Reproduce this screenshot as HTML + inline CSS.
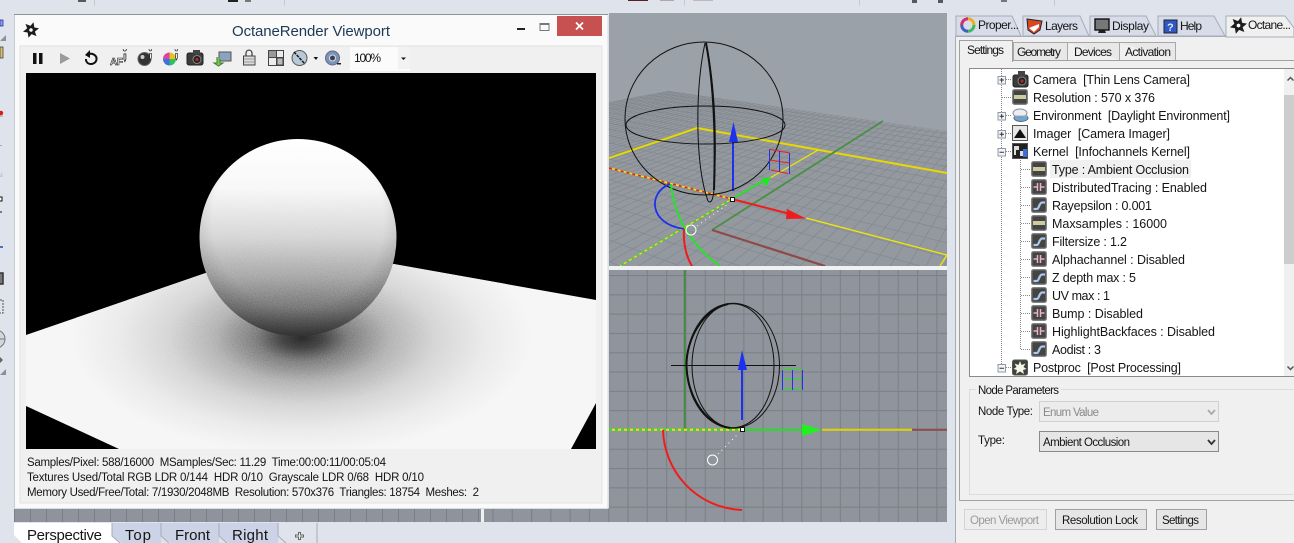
<!DOCTYPE html>
<html><head><meta charset="utf-8"><title>OctaneRender Viewport</title>
<style>
html,body{margin:0;padding:0;background:#dfe3eb;overflow:hidden}
svg{display:block}
text{font-family:"Liberation Sans",sans-serif;font-size:11.5px;fill:#151515;white-space:pre}
.tr text{font-size:12.5px}
.g{fill:#8a8a8a}
</style></head><body>
<svg width="1294" height="543" viewBox="0 0 1294 543" xmlns="http://www.w3.org/2000/svg">
<defs>
<filter id="n" x="0" y="0" width="100%" height="100%" color-interpolation-filters="sRGB"><feTurbulence type="fractalNoise" baseFrequency="1.2" numOctaves="2" seed="4"/><feColorMatrix values="1 0 0 0 .04 1 0 0 0 .04 1 0 0 0 .04 0 0 0 0 1"/></filter>
<linearGradient id="sph" x1="0" y1="0" x2="0" y2="1"><stop offset="0" stop-color="#fff"/><stop offset=".25" stop-color="#f8f8f8"/><stop offset=".5" stop-color="#d6d6d6"/><stop offset=".7" stop-color="#a8a8a8"/><stop offset=".86" stop-color="#767676"/><stop offset="1" stop-color="#3a3a3a"/></linearGradient>
<radialGradient id="edge" cx=".5" cy=".42" r=".58"><stop offset=".75" stop-color="#000" stop-opacity="0"/><stop offset="1" stop-color="#000" stop-opacity=".16"/></radialGradient>
<radialGradient id="shd" gradientUnits="userSpaceOnUse" cx="0" cy="0" r="1" gradientTransform="translate(302 338) scale(230 115)"><stop offset="0" stop-color="#2a2a2a"/><stop offset=".09" stop-color="#454545"/><stop offset=".2" stop-color="#7e7e7e"/><stop offset=".38" stop-color="#b4b4b4"/><stop offset=".58" stop-color="#d6d6d6"/><stop offset=".8" stop-color="#ebebeb"/><stop offset="1" stop-color="#f6f6f6"/></radialGradient>
<clipPath id="rc"><rect x="26" y="73" width="570" height="376"/></clipPath>
<clipPath id="floor"><path d="M26 335L287 245L596 300V403L571 449H119L26 406Z"/></clipPath>
<clipPath id="lit"><path d="M26 335L287 245L596 300V403L571 449H119L26 406Z"/><circle cx="298" cy="237.5" r="98.5"/></clipPath>
<clipPath id="tv"><rect x="609" y="13" width="338" height="253"/></clipPath>
<clipPath id="fl"><path d="M609 102L668 91L947 131V266H609Z"/></clipPath>
<clipPath id="bv"><rect x="609" y="270" width="338" height="252"/></clipPath>
<pattern id="grid" patternUnits="userSpaceOnUse" x="608.2" y="275" width="19.3" height="19.3"><rect width="19.3" height="19.3" fill="#90959d"/><path d="M.5 0V19.3M0 .5H19.3" stroke="#7c8188" stroke-width="1.300" fill="none"/></pattern>
<pattern id="bgrid" patternUnits="userSpaceOnUse" x="14" y="508" width="16" height="16"><rect width="16" height="16" fill="#8f949c"/><path d="M.5 0V16M0 .5H16" stroke="#7a7f86" stroke-width="1" fill="none"/></pattern>
<g id="blade"><path d="M-1.500 -3L2.500 -7.800L3.400 -2.200L1.700 -1L-.2 -2Z"/></g>
<symbol id="oct" viewBox="-8 -8 16 16" overflow="visible"><g fill="#1c1c1c"><use href="#blade"/><use href="#blade" transform="rotate(60)"/><use href="#blade" transform="rotate(120)"/><use href="#blade" transform="rotate(180)"/><use href="#blade" transform="rotate(240)"/><use href="#blade" transform="rotate(300)"/></g><circle r="1.500" fill="#fff"/></symbol>
<symbol id="iint" viewBox="0 0 16 16"><rect x=".5" y=".5" width="15" height="15" rx="2" fill="#5c5c5c" stroke="#858585"/><rect x="2" y="2" width="12" height="12" fill="#444"/><rect x="2" y="6" width="12" height="4" fill="#cfcba0"/></symbol>
<symbol id="icur" viewBox="0 0 16 16"><rect x=".5" y=".5" width="15" height="15" rx="2" fill="#5c5c5c" stroke="#858585"/><rect x="2" y="2" width="12" height="12" fill="#444"/><path d="M2.500 12H6C8 12 8 6 11 5.500H14" stroke="#a8c8ec" stroke-width="2.200" fill="none"/></symbol>
<symbol id="ipin" viewBox="0 0 16 16"><rect x=".5" y=".5" width="15" height="15" rx="2" fill="#5c5c5c" stroke="#858585"/><rect x="2" y="2" width="12" height="12" fill="#444"/><path d="M2.500 8H6.500M6.500 4V12M9.500 4V12M9.500 8H13.500" stroke="#eab0cc" stroke-width="1.500" fill="none"/></symbol>
<symbol id="mi" viewBox="0 0 18 18"><path d="M12.500 1.500a2 2 0 1 1 .1 0M11.500 5H14V12L12.700 15L11.500 12Z" fill="#e8eefa" stroke="#222"/></symbol>
</defs>

<!-- base -->
<rect width="1294" height="543" fill="#dfe3eb"/>

<!-- top strip bits -->
<g fill="#55585e"><rect x="78" y="0" width="8" height="2"/><rect x="228" y="0" width="10" height="2" fill="#222"/><rect x="245" y="0" width="6" height="2" fill="#777"/><rect x="628" y="0" width="20" height="1" fill="#5a2020"/><rect x="660" y="0" width="14" height="1" fill="#aaa"/><rect x="693" y="0" width="20" height="1" fill="#bbb"/><rect x="1001" y="0" width="6" height="2" fill="#777"/><rect x="912" y="0" width="5" height="3"/><rect x="938" y="0" width="5" height="3"/></g>
<path d="M94.500 0V6M284.500 0V6M684.500 0V6M859.500 0V6M1054.500 0V6" stroke="#c4c9d2"/>

<!-- left strip bits -->
<rect x="0" y="20" width="3" height="6" fill="#8aa4f0" stroke="#1a1a9a" stroke-width=".7"/>
<path d="M6 35L0 41H6Z" fill="#8d9197"/>
<rect x="0" y="47" width="3" height="11" fill="#d8c070" stroke="#333" stroke-width=".7"/>
<circle cx="1" cy="113" r="2.200" fill="#e01818"/>
<path d="M0 116H3" stroke="#999"/><path d="M0 145.500H2" stroke="#aaa"/>
<path d="M0 177H3L1.500 172Z" fill="#c6c9ce"/>
<rect x="-1" y="197" width="3" height="4" fill="#fff" stroke="#111"/>
<path d="M0 212H2" stroke="#111"/>
<path d="M0 247H3" stroke="#2244bb" stroke-width="1.500"/>
<path d="M0 273H3V284H0M0 284H3" stroke="#333" stroke-width="1.500" fill="#777"/>
<path d="M0 300H3V313H0" stroke="#555" stroke-dasharray="2 1" fill="none"/>
<circle cx="-4" cy="339" r="9" fill="#d3d6dc" stroke="#777"/><path d="M0 339H5" stroke="#777"/>
<path d="M0 357L3 360L0 363Z" fill="#666"/>
<path d="M6 369L0 375H6Z" fill="#8d9197"/>

<!-- top perspective viewport -->
<rect x="609" y="13" width="338" height="253" fill="#9ba1a9"/>
<g clip-path="url(#tv)">
<g clip-path="url(#fl)">
<rect x="609" y="85" width="338" height="185" fill="#93999f"/>
<path stroke="#82888f" stroke-width=".7" fill="none" d="M1063 6L-190 266M1063 6L-172 266M1063 6L-154 266M1063 6L-136 266M1063 6L-118 266M1063 6L-100 266M1063 6L-82 266M1063 6L-64 266M1063 6L-46 266M1063 6L-28 266M1063 6L-10 266M1063 6L8 266M1063 6L26 266M1063 6L44 266M1063 6L62 266M1063 6L80 266M1063 6L98 266M1063 6L116 266M1063 6L134 266M1063 6L152 266M1063 6L170 266M1063 6L188 266M1063 6L206 266M1063 6L224 266M1063 6L242 266M1063 6L260 266M1063 6L278 266M1063 6L296 266M1063 6L314 266M1063 6L332 266M1063 6L350 266M1063 6L368 266M1063 6L386 266M1063 6L404 266M1063 6L422 266M1063 6L440 266M1063 6L458 266M1063 6L476 266M1063 6L494 266M1063 6L512 266M1063 6L530 266M1063 6L548 266M1063 6L566 266M1063 6L584 266M1063 6L602 266M1063 6L620 266M1063 6L638 266M1063 6L656 266M1063 6L674 266M1063 6L692 266M1063 6L710 266M1063 6L728 266M1063 6L746 266M1063 6L764 266M1063 6L782 266M1063 6L800 266M1063 6L818 266M1063 6L836 266M1063 6L854 266M1063 6L872 266M1063 6L890 266M1063 6L908 266M1063 6L926 266M1063 6L944 266"/>
<path stroke="#82888f" stroke-width=".7" fill="none" d="M-77 -11L620 266M-77 -11L680 266M-77 -11L740 266M-77 -11L800 266M-77 -11L860 266M-77 -11L920 266M-77 -11L980 266M-77 -11L1040 266M-77 -11L1100 266M-77 -11L1160 266M-77 -11L1220 266M-77 -11L1280 266M-77 -11L1340 266M-77 -11L1400 266M-77 -11L1460 266M-77 -11L1520 266M-77 -11L1580 266M-77 -11L1640 266M-77 -11L1700 266M-77 -11L1760 266M-77 -11L1820 266M-77 -11L1880 266M-77 -11L1940 266M-77 -11L2000 266"/>
</g>
<path d="M609 158L697 128L947 173" stroke="#e6d800" stroke-width="2" fill="none"/>
<path d="M712 230L883 121" stroke="#4a8f44" stroke-width="1.800"/>
<path d="M712 230L825 266" stroke="#8c4a48" stroke-width="2.200"/>
<path d="M806 218L947 255L940 266" stroke="#efe800" stroke-width="1.300" fill="none"/>
<path d="M770 178L818 150" stroke="#efe800" stroke-width="1.300"/>
<path d="M609 168L732 199" stroke="#efe800" stroke-width="1.500"/>
<path d="M609 168L732 199" stroke="#f01818" stroke-width="1.500" stroke-dasharray="3 3"/>
<path d="M732 199L620 266" stroke="#efe800" stroke-width="1.300"/>
<path d="M732 199L620 266" stroke="#22dd22" stroke-width="1.300" stroke-dasharray="3 3"/>
<path d="M732 199L765 180" stroke="#20e820" stroke-width="1.800"/><path d="M771 177L761 179L766 187Z" fill="#20e820"/>
<path d="M732 199L790 214" stroke="#f01c1c" stroke-width="2"/><path d="M806 218.500L787 209L786 219Z" fill="#f01c1c"/>
<path d="M733 191V140" stroke="#1c30f0" stroke-width="2"/><path d="M733.500 122L729 142H738Z" fill="#1c30f0"/>
<g fill="none" stroke="#111">
<ellipse cx="704" cy="118.500" rx="79" ry="76.500" stroke-width="1"/>
<ellipse cx="705.500" cy="125" rx="79.500" ry="19" stroke-width="1"/>
<path d="M705 43C695 90 695 165 708 201C711 204 713 200 714 190C717 140 715 85 706 42" stroke-width="1"/>
<path d="M706 43C713 80 716 130 714 190" stroke-width="2"/>
</g>
<g fill="none" stroke-width="1"><path d="M770 149.500L790 153M770 160L789 163M771 170L788 173.500" stroke="#f01c1c"/><path d="M769.500 149.500V170M779.500 151V172M789.500 153V174" stroke="#2030e0"/></g>
<path d="M670 184C648 192 648 224 684 229" stroke="#1c30f0" stroke-width="1.800" fill="none"/>
<path d="M671 184C674 215 690 245 720 266" stroke="#20e820" stroke-width="1.800" fill="none"/>
<path d="M684 229C683 245 687 258 692 266" stroke="#f01c1c" stroke-width="2" fill="none"/>
<circle cx="691" cy="230" r="5" fill="none" stroke="#fff"/>
<path d="M697 226L728 204" stroke="#fff" stroke-dasharray="1 4"/>
<rect x="730.500" y="197.500" width="4" height="4" fill="#fff" stroke="#111"/>
</g>
<rect x="609" y="266" width="338" height="4" fill="#f0f1f3"/>

<!-- bottom front viewport -->
<rect x="609" y="270" width="338" height="252" fill="url(#grid)"/>
<g clip-path="url(#bv)">
<path d="M684.700 270V429" stroke="#468c40" stroke-width="2"/>
<path d="M609 429.700H740" stroke="#efe800" stroke-width="2"/>
<path d="M609 429.700H740" stroke="#22e022" stroke-width="2" stroke-dasharray="3 3"/>
<path d="M744 429.700H802" stroke="#20e020" stroke-width="2"/>
<path d="M822 430L802 424V436Z" fill="#20f020"/>
<path d="M822 429.700H912" stroke="#e2d400" stroke-width="2"/>
<path d="M912 429.700H947" stroke="#8c4a48" stroke-width="2"/>
<g fill="none" stroke="#111"><ellipse cx="733" cy="365.700" rx="46.500" ry="62.500" stroke-width="1"/><ellipse cx="733" cy="365.700" rx="41" ry="62" stroke-width="1"/><path d="M728 304C702 310 686 340 686.500 366C687 395 705 425 730 428" stroke-width="2"/></g>
<path d="M671 365.500H796" stroke="#111" stroke-width="1"/>
<path d="M742 420V368" stroke="#1c30f0" stroke-width="2"/><path d="M742 350L738 370H747Z" fill="#1c30f0"/>
<g fill="none" stroke-width="1"><path d="M782 369.500H802M782 379.500H802M782 389.500H802" stroke="#22e022"/><path d="M782.500 370V390M792.500 370V390M802.500 370V390" stroke="#2030f0"/></g>
<path d="M663 430C664 470 695 508 742 510" stroke="#f01c1c" stroke-width="2" fill="none"/>
<circle cx="712.500" cy="460" r="5" fill="none" stroke="#fff"/>
<path d="M718 454L738 434" stroke="#fff" stroke-dasharray="1 4"/>
<rect x="740.500" y="427.500" width="4" height="4" fill="#fff" stroke="#111"/>
</g>

<!-- strip under window -->
<rect x="14" y="508" width="467" height="14" fill="url(#bgrid)"/>
<rect x="481" y="508" width="3" height="14" fill="#f0f1f3"/>
<rect x="484" y="508" width="125" height="14" fill="url(#grid)"/>

<!-- render window -->
<rect x="14" y="14" width="594" height="495" fill="#fafafa"/>
<path d="M14 14.500H608" stroke="#8d929a"/><path d="M14.500 15V508" stroke="#c8ccd2"/>
<path d="M608 15V509M14 508.500H608" stroke="#d8dbe0"/>
<rect x="20" y="46" width="582" height="457" fill="#f0f0f0" stroke="#e2e2e2"/>
<use href="#oct" x="23" y="22" width="16" height="16"/>
<text x="232" y="36" textLength="158" style="font-size:15px;fill:#1b3a57">OctaneRender Viewport</text>
<rect x="517" y="28" width="8" height="2" fill="#222"/>
<rect x="540" y="23.500" width="9" height="7" fill="none" stroke="#777" stroke-width="1"/><rect x="540" y="23" width="9" height="2" fill="#777"/>
<rect x="557" y="16" width="45" height="20" fill="#c75050"/>
<path d="M576 22.500L583 29.500M583 22.500L576 29.500" stroke="#fff" stroke-width="1.800"/>

<!-- toolbar icons -->
<rect x="33" y="53" width="3.500" height="11" fill="#111"/><rect x="39" y="53" width="3.500" height="11" fill="#111"/>
<path d="M60 53L70 58.500L60 64Z" fill="#9b9b9b"/>
<path d="M87.500 54.500C93 52 97 56 96.500 59.500C96 63 92 65 88.500 63.500C86.500 62.500 85.800 60.500 86 59" stroke="#111" stroke-width="2" fill="none"/><path d="M90 50L85 55L90 58Z" fill="#111"/>
<text x="110" y="65" style="font-size:10px;font-weight:bold;fill:#fff;stroke:#222;stroke-width:.6" textLength="13">AF</text>
<use href="#mi" x="115" y="49" width="14" height="16"/>
<circle cx="144.500" cy="59" r="6.500" fill="#333" stroke="#666"/><circle cx="142.500" cy="57" r="2" fill="#ccc"/><use href="#mi" x="142" y="49" width="12" height="14"/>
<g transform="translate(169.500 59)"><path d="M0 0L0 -6.500A6.500 6.500 0 0 1 6.500 0Z" fill="#e8c020"/><path d="M0 0L6.500 0A6.500 6.500 0 0 1 0 6.500Z" fill="#30c060"/><path d="M0 0L0 6.500A6.500 6.500 0 0 1 -6.500 0Z" fill="#4070e0"/><path d="M0 0L-6.500 0A6.500 6.500 0 0 1 0 -6.500Z" fill="#e040a0"/></g><use href="#mi" x="168" y="49" width="12" height="14"/>
<rect x="187" y="53" width="16" height="12" rx="2" fill="#3c3c3c" stroke="#222"/><rect x="193" y="50" width="7" height="4" fill="#444"/><circle cx="197" cy="59.500" r="4" fill="#222" stroke="#888"/><circle cx="197" cy="59.500" r="1.600" fill="#b02828"/>
<rect x="219" y="52" width="12" height="9" fill="#8aa4c0" stroke="#555"/><path d="M217 57V63H214L218.500 66L223 63H220V59" fill="#80c850" stroke="#3a7a2a"/>
<path d="M246 56V53.500C246 49 252 49 252 53.500V56" fill="none" stroke="#444" stroke-width="1.300"/><rect x="243.500" y="56" width="11.500" height="9" fill="#dcdcdc" stroke="#444"/><path d="M244 59H255M244 62H255" stroke="#999"/>
<rect x="268.500" y="50.500" width="15" height="15" fill="#ececec" stroke="#444"/><path d="M268.500 57.500H283M276.500 50.500V65" stroke="#444"/><rect x="269" y="51" width="7" height="6" fill="#999"/><rect x="277" y="58" width="6" height="7" fill="#bbb" stroke="#444"/>
<circle cx="299.500" cy="58" r="7.500" fill="#b8c8d4" stroke="#555"/><path d="M294 52L305 64" stroke="#111" stroke-width="1.400" stroke-dasharray="3 1"/>
<path d="M313.500 57H318L316 60Z" fill="#111"/>
<circle cx="332.500" cy="58" r="7" fill="#7a94b4" stroke="#668"/><circle cx="332.500" cy="58" r="3" fill="#345" stroke="#dde"/><rect x="337" y="63" width="4" height="1.500" fill="#222"/>
<rect x="350" y="47" width="60" height="24" fill="#fbfbfb"/><rect x="398" y="47" width="12" height="22" fill="#f2f2f2"/>
<text x="354" y="62" textLength="27" style="font-size:12px;fill:#111">100%</text>
<path d="M401 57.500H406L403.500 60Z" fill="#111"/>

<!-- render -->
<g clip-path="url(#rc)">
<rect x="26" y="73" width="570" height="376" fill="#000"/>
<path d="M26 335L287 245L596 300V403L571 449H119L26 406Z" fill="#f6f6f6"/>
<g clip-path="url(#floor)"><ellipse cx="302" cy="338" rx="230" ry="115" fill="url(#shd)"/></g>
<circle cx="298" cy="237.500" r="98.500" fill="url(#sph)"/>
<circle cx="298" cy="237.500" r="98.500" fill="url(#edge)"/>
<rect x="26" y="73" width="570" height="376" filter="url(#n)" clip-path="url(#lit)" style="mix-blend-mode:overlay" opacity=".24"/>
</g>

<!-- status -->
<text x="27" y="466" textLength="359">Samples/Pixel: 588/16000  MSamples/Sec: 11.29  Time:00:00:11/00:05:04</text>
<text x="27" y="481" textLength="397">Textures Used/Total RGB LDR 0/144  HDR 0/10  Grayscale LDR 0/68  HDR 0/10</text>
<text x="27" y="496" textLength="452">Memory Used/Free/Total: 7/1930/2048MB  Resolution: 570x376  Triangles: 18754  Meshes:  2</text>

<!-- bottom tabs -->
<rect x="14" y="522" width="940" height="21" fill="#dfe3eb"/>
<path d="M112 523V536L122 543H161V523Z" fill="#ccd3e6"/>
<path d="M161 523V536L171 543H219V523Z" fill="#ccd3e6"/>
<path d="M219 523V536L229 543H278V523Z" fill="#ccd3e6"/>
<path d="M14 523H112V536L120 543H22L14 535Z" fill="#fff"/>
<path d="M112 523V536L120 543M161 523V536L169 543M219 523V536L227 543M278 523V536L286 543M317 523V543" stroke="#a5acba" fill="none"/>
<text x="27" y="540" textLength="75" style="font-size:15px">Perspective</text>
<text x="125" y="540" textLength="26" style="font-size:15px">Top</text>
<text x="175" y="540" textLength="35" style="font-size:15px">Front</text>
<text x="232" y="540" textLength="36" style="font-size:15px">Right</text>
<path d="M298.500 532.500H300.500V535H303.500V537H300.500V539.500H298.500V537H295.500V535H298.500Z" fill="#eef0f4" stroke="#666"/>

<!-- right panel -->
<rect x="955" y="36" width="339" height="507" fill="#f0f0f0"/>
<path d="M955.500 36V543" stroke="#a6adb9"/>
<path d="M956 36V16H1012L1021 36Z" fill="#d7dce8" stroke="#a6adb9"/>
<path d="M1023 36V16H1080L1089 36Z" fill="#d7dce8" stroke="#a6adb9"/>
<path d="M1090 36V16H1146L1156 36Z" fill="#d7dce8" stroke="#a6adb9"/>
<path d="M1158 36V16H1214L1225 36Z" fill="#d7dce8" stroke="#a6adb9"/>
<path d="M1226 37V16H1285L1294 28V37Z" fill="#f0f0f0" stroke="#a6adb9"/>
<path d="M956 36.500H1226" stroke="#a6adb9"/>
<g fill="none" stroke-width="3"><path d="M968 18.700A6.300 6.300 0 0 1 974 25" stroke="#e8b020"/><path d="M974 25A6.300 6.300 0 0 1 968 31.300" stroke="#40b860"/><path d="M968 31.300A6.300 6.300 0 0 1 961.700 25" stroke="#4060c0"/><path d="M961.700 25A6.300 6.300 0 0 1 968 18.700" stroke="#d03070"/></g>
<path d="M1027 19L1042 21L1040 30L1034 34L1028 30Z" fill="#d84820" stroke="#223"/><path d="M1029 28L1039 24V27L1034 32Z" fill="#fff"/>
<rect x="1095" y="19" width="14" height="11" fill="#777" stroke="#111" stroke-width="1.400"/><path d="M1098 33H1106L1105 30.500H1099Z" fill="#222"/>
<rect x="1164" y="20" width="13" height="13" fill="#3058c0" stroke="#223"/><text x="1167" y="31" style="font-size:11px;font-weight:bold;fill:#dfe8ff">?</text>
<use href="#oct" x="1230" y="17" width="17" height="17"/>
<text x="978" y="29" textLength="41" style="font-size:12px">Proper...</text>
<text x="1045" y="30" textLength="33" style="font-size:12px">Layers</text>
<text x="1112" y="30" textLength="37" style="font-size:12px">Display</text>
<text x="1180" y="30" textLength="22" style="font-size:12px">Help</text>
<text x="1248" y="29" textLength="43" style="font-size:12px">Octane...</text>

<!-- sub tabs -->
<path d="M959.500 500.500V60.500H1294" fill="#f0f0f0" stroke="#a0a0a0"/>
<path d="M959.500 500.500H1294" stroke="#a0a0a0"/>
<path d="M1013.500 60V42.500H1067.500V60M1068 42.500H1119.500V60M1120 42.500H1175.500V60" fill="#e8e8e8" stroke="#a8a8a8"/>
<path d="M959.500 62V40.500H1012.500V62" fill="#f0f0f0" stroke="#a0a0a0"/>
<rect x="960" y="60" width="52" height="3" fill="#f0f0f0"/>
<text x="967" y="54" textLength="37" style="font-size:12px">Settings</text>
<text x="1017" y="56" textLength="44" style="font-size:12px">Geometry</text>
<text x="1074" y="56" textLength="38" style="font-size:12px">Devices</text>
<text x="1125" y="56" textLength="46" style="font-size:12px">Activation</text>

<!-- tree -->
<rect x="969.500" y="68.500" width="330" height="308" fill="#fff" stroke="#8a8a8a"/>
<rect x="1284" y="69" width="10" height="307" fill="#f0f0f0"/>
<rect x="1284" y="95" width="10" height="169" fill="#cdcdcd"/>
<path d="M1287.500 80.500L1290.500 77.500L1293.500 80.500M1287.500 366.500L1290.500 369.500L1293.500 366.500" stroke="#555" stroke-width="1.500" fill="none"/>
<g stroke="#888" stroke-dasharray="1 1" fill="none">
<path d="M1001.500 69V367M1006 79.500H1012M1002 97.500H1012M1006 115.500H1012M1006 133.500H1012M1006 151.500H1012M1006 367.500H1012"/>
<path d="M1020.500 160V349M1021 169.500H1031M1021 187.500H1031M1021 205.500H1031M1021 223.500H1031M1021 241.500H1031M1021 259.500H1031M1021 277.500H1031M1021 295.500H1031M1021 313.500H1031M1021 331.500H1031M1021 349.500H1031"/>
</g>
<g fill="#f4f5f7" stroke="#8f98a8">
<rect x="998" y="76.500" width="7.500" height="7.500"/><rect x="998" y="112.500" width="7.500" height="7.500"/><rect x="998" y="130.500" width="7.500" height="7.500"/><rect x="998" y="148.500" width="7.500" height="7.500"/><rect x="998" y="364.500" width="7.500" height="7.500"/>
</g>
<path d="M999.500 80H1004M1001.700 78V82.500M999.500 116.200H1004M1001.700 114V118.500M999.500 134.200H1004M1001.700 132V136.500M999.500 152.200H1004M999.500 368.200H1004" stroke="#333"/>
<!-- tree icons -->
<rect x="1013" y="75" width="15" height="12" rx="2" fill="#3c3c3c" stroke="#222"/><rect x="1018" y="71" width="7" height="5" fill="#444"/><circle cx="1022" cy="81" r="4" fill="#222" stroke="#888"/><circle cx="1022" cy="81" r="1.600" fill="#b02828"/>
<use href="#iint" x="1012" y="89" width="16" height="16"/>
<ellipse cx="1021" cy="118" rx="7" ry="3.500" fill="#6aa8d8" stroke="#667"/><ellipse cx="1020" cy="113" rx="7" ry="4" fill="#e8eef2" stroke="#889"/><path d="M1014 116H1028" stroke="#a8b0b8"/>
<rect x="1012.500" y="125.500" width="15" height="15" fill="#e8e8e8" stroke="#555"/><path d="M1014 138L1020 129L1026 138Z" fill="#111"/>
<rect x="1012.500" y="143.500" width="15" height="15" fill="#222" stroke="#555"/><path d="M1014 146H1019V150H1016V155H1014ZM1020 151H1023V156H1020Z" fill="#ddd"/><rect x="1023" y="149" width="4" height="8" fill="#3870e0"/>
<use href="#iint" x="1031" y="161" width="16" height="16"/>
<use href="#ipin" x="1031" y="179" width="16" height="16"/>
<use href="#icur" x="1031" y="197" width="16" height="16"/>
<use href="#iint" x="1031" y="215" width="16" height="16"/>
<use href="#icur" x="1031" y="233" width="16" height="16"/>
<use href="#ipin" x="1031" y="251" width="16" height="16"/>
<use href="#icur" x="1031" y="269" width="16" height="16"/>
<use href="#icur" x="1031" y="287" width="16" height="16"/>
<use href="#ipin" x="1031" y="305" width="16" height="16"/>
<use href="#ipin" x="1031" y="323" width="16" height="16"/>
<use href="#icur" x="1031" y="341" width="16" height="16"/>
<rect x="1012.500" y="360" width="15" height="15" rx="2" fill="#3a4438" stroke="#555"/><path d="M1020 361L1021.500 365L1025.500 363.500L1023.500 367L1026.500 369L1023 370L1024 374L1020 371.500L1016 374L1017 370L1013.500 369L1016.500 367L1014.500 363.500L1018.500 365Z" fill="#f4f4e8"/>
<rect x="1050" y="160" width="141" height="18" fill="#f0f0f0"/>
<g class="tr" transform="translate(0 1)">
<text x="1033" y="83" textLength="157">Camera  [Thin Lens Camera]</text>
<text x="1033" y="101" textLength="122">Resolution : 570 x 376</text>
<text x="1033" y="119" textLength="197">Environment  [Daylight Environment]</text>
<text x="1033" y="137" textLength="137">Imager  [Camera Imager]</text>
<text x="1033" y="155" textLength="157">Kernel  [Infochannels Kernel]</text>
<text x="1052" y="173" textLength="137">Type : Ambient Occlusion</text>
<text x="1052" y="191" textLength="155">DistributedTracing : Enabled</text>
<text x="1052" y="209" textLength="100">Rayepsilon : 0.001</text>
<text x="1052" y="227" textLength="115">Maxsamples : 16000</text>
<text x="1052" y="245" textLength="75">Filtersize : 1.2</text>
<text x="1052" y="263" textLength="133">Alphachannel : Disabled</text>
<text x="1052" y="281" textLength="84">Z depth max : 5</text>
<text x="1052" y="299" textLength="58">UV max : 1</text>
<text x="1052" y="317" textLength="91">Bump : Disabled</text>
<text x="1052" y="335" textLength="163">HighlightBackfaces : Disabled</text>
<text x="1052" y="353" textLength="49">Aodist : 3</text>
<text x="1033" y="371" textLength="148">Postproc  [Post Processing]</text>
</g>

<!-- node parameters -->
<rect x="969.500" y="389.500" width="330" height="105" fill="none" stroke="#dcdcdc"/>
<rect x="976" y="386" width="85" height="8" fill="#f0f0f0"/>
<text x="978" y="394" textLength="81">Node Parameters</text>
<text x="978" y="415" textLength="55">Node Type:</text>
<rect x="1039.500" y="401.500" width="179" height="20" fill="#ececec" stroke="#d0d0d0"/>
<text x="1043" y="416" textLength="56" class="g">Enum Value</text>
<path d="M1208 410L1211.500 414L1215 410" stroke="#aaa" stroke-width="1.800" fill="none"/>
<text x="978" y="444" textLength="27">Type:</text>
<rect x="1039.500" y="431.500" width="179" height="20" fill="#e6e6e6" stroke="#8a8a8a"/>
<text x="1043" y="446" textLength="87">Ambient Occlusion</text>
<path d="M1208 440L1211.500 444L1215 440" stroke="#333" stroke-width="1.800" fill="none"/>

<!-- buttons -->
<rect x="964.500" y="509.500" width="82" height="20" fill="#ededed" stroke="#d4d4d4"/>
<text x="970" y="524" textLength="69" class="g" style="fill:#9a9a9a">Open Viewport</text>
<rect x="1055.500" y="509.500" width="91" height="20" fill="#e6e6e6" stroke="#a0a0a0"/>
<text x="1062" y="524" textLength="76">Resolution Lock</text>
<rect x="1156.500" y="509.500" width="50" height="20" fill="#e6e6e6" stroke="#a0a0a0"/>
<text x="1162" y="524" textLength="37">Settings</text>
</svg>
</body></html>
